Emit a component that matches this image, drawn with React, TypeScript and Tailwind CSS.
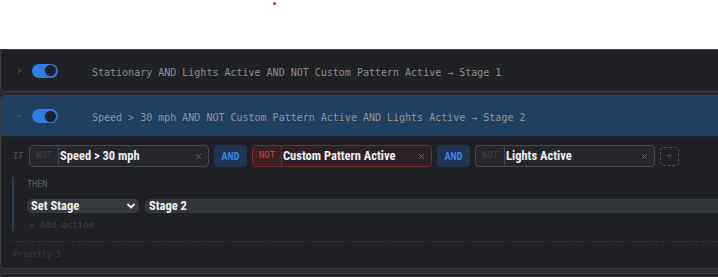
import React from "react";

const mono = { fontFamily: '"DejaVu Sans Mono", "Liberation Mono", monospace' };
const sans = { fontFamily: '"Liberation Sans Narrow", "Roboto Condensed", Roboto, Arial, sans-serif' };

function Toggle() {
  return (
    <div className="relative w-[26px] h-[14px] rounded-full bg-[#2f7ee6]">
      <div className="absolute right-[2px] top-[1.5px] w-[11px] h-[11px] rounded-full bg-[#1d232d] ring-1 ring-[#3a6fb8]" />
    </div>
  );
}

function Chevron({ down }: { down?: boolean }) {
  return (
    <svg width="8" height="8" viewBox="0 0 8 8" className="shrink-0">
      {down ? (
        <path d="M1.5 2.5 L4 5 L6.5 2.5" stroke="#555861" strokeWidth="1" fill="none" />
      ) : (
        <path d="M3 1.5 L5.5 4 L3 6.5" stroke="#555861" strokeWidth="1" fill="none" />
      )}
    </svg>
  );
}

function X() {
  return (
    <svg width="7" height="7" viewBox="0 0 7 7">
      <path d="M1 1 L6 6 M6 1 L1 6" stroke="#5b5e66" strokeWidth="1" />
    </svg>
  );
}

function Cond({ text, neg }: { text: string; neg?: boolean }) {
  return (
    <div
      className={
        "flex items-center w-[180px] h-[22px] rounded-[4px] border shrink-0 " +
        (neg ? "border-[#7a2a2d] bg-[#2e2125]" : "border-[#45474e] bg-[#25272d]")
      }
    >
      <div
        className={
          "w-[29px] h-full flex items-center justify-center border-r text-[9px] rounded-l-[4px] " +
          (neg ? "border-[#6a2a2d] bg-[#3d2024] text-[#d93a3a]" : "border-[#45474e] text-[#3d4046]")
        }
        style={mono}
      >
        NOT
      </div>
      <div className="flex-1 pl-[1px] pt-[1px] text-[12.5px] font-bold text-[#eceef2]" style={sans}>
        {text}
      </div>
      <div className="pr-[6px] flex items-center">
        <X />
      </div>
    </div>
  );
}

function And() {
  return (
    <div
      className="w-[33px] h-[22px] rounded-[4px] bg-[#1f3450] text-[#3d86ea] text-[10px] font-bold flex items-center justify-center shrink-0"
      style={mono}
    >
      AND
    </div>
  );
}

export default function App() {
  return (
    <div className="w-[718px] h-[277px] overflow-hidden bg-white relative">
      <div className="absolute left-[273px] top-[2px] w-[3px] h-[3px] rounded-full bg-[#c0262d]" />
      <div className="h-[49px]" />
      <div className="w-[760px] bg-[#2a2b2f] flex flex-col gap-[3px] pb-[10px]">
        {/* Card 1 */}
        <div className="rounded-[5px] border border-[#3d3f45] bg-[#202125] overflow-hidden">
          <div className="h-[41px] flex items-center pl-[14px]">
            <Chevron />
            <div className="ml-[9px]">
              <Toggle />
            </div>
            <div className="ml-[34px] pt-[3px] text-[10px] text-[#8a8e95] whitespace-nowrap" style={mono}>
              Stationary AND Lights Active AND NOT Custom Pattern Active → Stage 1
            </div>
          </div>
        </div>

        {/* Card 2 */}
        <div className="rounded-[5px] border border-[#3a3c44] bg-[#202125] overflow-hidden">
          <div className="h-[41px] flex items-center pl-[14px] bg-[#213f5e] border-b border-[#1b2a3b]">
            <Chevron down />
            <div className="ml-[9px]">
              <Toggle />
            </div>
            <div className="ml-[34px] pt-[2px] text-[10px] text-[#8c96a3] whitespace-nowrap" style={mono}>
              Speed &gt; 30 mph AND NOT Custom Pattern Active AND Lights Active → Stage 2
            </div>
          </div>
          <div className="pl-[11px] pt-[8px]">
            <div className="flex items-center gap-[5px]">
              <div className="w-[12px] pt-[1px] text-[9px] text-[#4d5058] pl-[1px]" style={mono}>
                IF
              </div>
              <Cond text="Speed > 30 mph" />
              <And />
              <Cond text="Custom Pattern Active" neg />
              <And />
              <Cond text="Lights Active" />
              <div className="w-[19px] h-[19px] rounded-[4px] border border-dashed border-[#4a4c53] flex items-center justify-center text-[#44474d] text-[12px] shrink-0">
                +
              </div>
            </div>
            <div className="mt-[10px] border-l-2 border-[#263b55] pl-[13px] h-[54px] flex flex-col">
              <div className="pt-[1px] h-[13px] text-[8.5px] leading-[12px] text-[#5a5d65]" style={mono}>
                THEN
              </div>
              <div className="mt-[9px] flex items-center gap-[6px]">
                <div
                  className="w-[112px] h-[14px] rounded-[5px] bg-[#373941] flex items-center justify-between pl-[4px] pr-[3px] text-[12.5px] font-bold text-[#f0f1f4]"
                  style={sans}
                >
                  <span className="pt-[1px]">Set Stage</span>
                  <svg width="10" height="8" viewBox="0 0 10 8">
                    <path d="M1.5 2 L5 5.5 L8.5 2" stroke="#f0f1f4" strokeWidth="1.8" fill="none" />
                  </svg>
                </div>
                <div
                  className="flex-1 h-[14px] rounded-l-[5px] bg-[#33363f] flex items-center pl-[4px] pt-[1px] text-[12.5px] font-bold text-[#f0f1f4]"
                  style={sans}
                >
                  Stage 2
                </div>
              </div>
              <div className="mt-[6px] pl-[2px] text-[9px] text-[#3d4046]" style={mono}>
                + Add action
              </div>
            </div>
            <div className="mt-[10px] border-t border-dashed border-[#35373c]" />
            <div className="h-[26px] flex items-center pl-[1px] text-[8px] text-[#3b3d42]" style={mono}>
              Priority 5
            </div>
          </div>
        </div>

        {/* Card 3 */}
        <div className="mt-[1px] h-[30px] rounded-[5px] border border-[#3d3f45] bg-[#202125]" />
      </div>
    </div>
  );
}
